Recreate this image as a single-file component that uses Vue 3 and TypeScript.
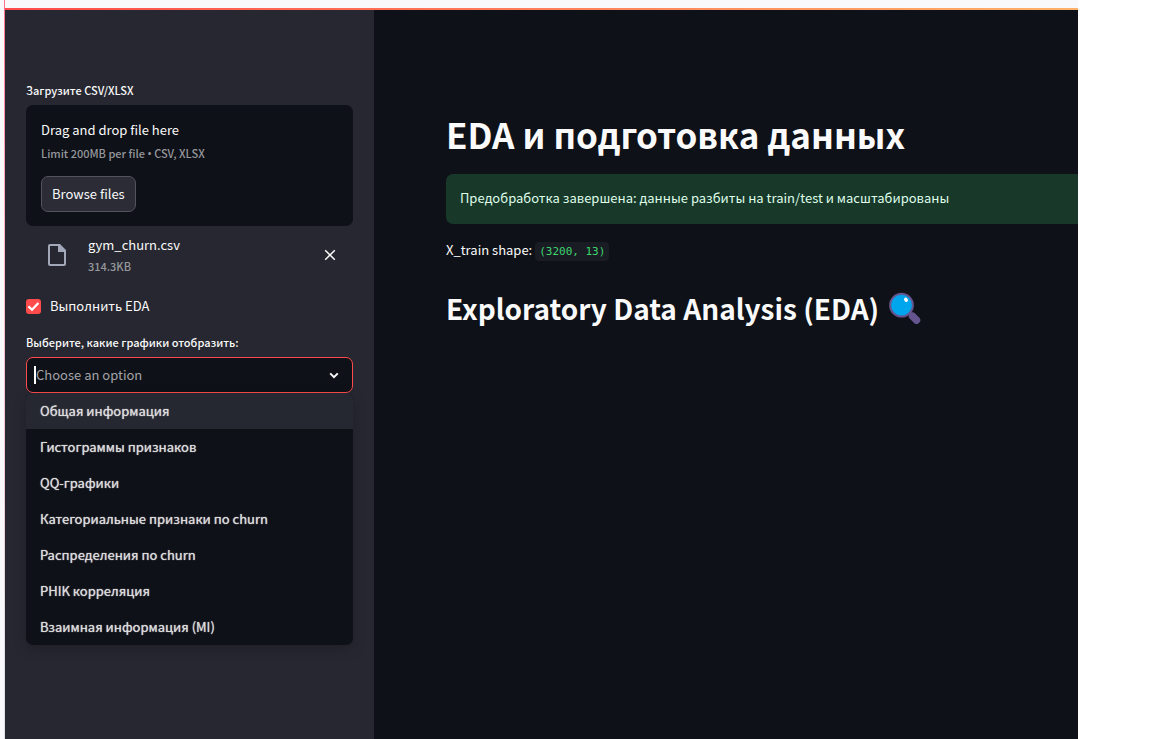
<script setup lang="ts">
import { ref } from 'vue'

const runEda = ref(true)
const query = ref('')
const active = ref(0)
const fileName = ref<string | null>('gym_churn.csv')
const options: string[] = [
  'Общая информация',
  'Гистограммы признаков',
  'QQ-графики',
  'Категориальные признаки по churn',
  'Распределения по churn',
  'PHIK корреляция',
  'Взаимная информация (MI)',
]
</script>

<template>
  <div class="page">
    <div class="rail"></div>
    <div class="window">
      <div class="topbar"></div>
      <div class="app">
        <aside class="sidebar">
          <p id="upload-label" class="label">Загрузите CSV/XLSX</p>
          <section class="dropzone" aria-labelledby="upload-label">
            <p class="drop-title">Drag and drop file here</p>
            <p class="small">Limit 200MB per file <span class="dot">•</span> CSV, XLSX</p>
            <button type="button" class="browse">Browse files</button>
          </section>

          <div v-if="fileName" class="file">
            <svg class="file-icon" viewBox="0 0 18 22" aria-hidden="true">
              <path fill-rule="evenodd" d="M2 0h10l6 6v14a2 2 0 0 1-2 2H2a2 2 0 0 1-2-2V2A2 2 0 0 1 2 0ZM2 2v18h14V8H10V2Z" />
            </svg>
            <div class="file-text">
              <p class="file-name">{{ fileName }}</p>
              <p class="small">314.3KB</p>
            </div>
            <button type="button" class="remove" aria-label="Remove file" @click="fileName = null">
              <svg viewBox="0 0 12 12" aria-hidden="true"><path d="M1.2 1.2l9.6 9.6M10.8 1.2l-9.6 9.6" /></svg>
            </button>
          </div>

          <label class="check">
            <input v-model="runEda" type="checkbox" />
            <span>Выполнить EDA</span>
          </label>

          <label class="label" for="charts">Выберите, какие графики отобразить:</label>
          <div class="select">
            <div class="control">
              <span class="caret"></span>
              <input id="charts" v-model="query" type="text" role="combobox" aria-expanded="true" aria-controls="chart-list" placeholder="Choose an option" />
              <svg class="chevron" viewBox="0 0 10 7" aria-hidden="true"><path d="M1.2 1.4L5 5.2l3.8-3.8" /></svg>
            </div>
            <ul id="chart-list" class="menu" role="listbox">
              <li
                v-for="(option, i) in options"
                :key="option"
                role="option"
                class="option"
                :class="{ active: i === active }"
                :aria-selected="i === active"
                @mouseenter="active = i"
              >{{ option }}</li>
            </ul>
          </div>
        </aside>

        <main class="main">
          <h1>EDA и подготовка данных</h1>
          <div class="alert" role="status">Предобработка завершена: данные разбиты на train/test и масштабированы</div>
          <p class="shape">X_train shape: <code>(3200, 13)</code></p>
          <h2>
            <span>Exploratory Data Analysis (EDA)</span>
            <svg class="lens" viewBox="0 0 32 32" aria-hidden="true">
              <path d="M20 20l2.5 2.5" stroke="#64558f" stroke-width="3" />
              <path d="M23.5 24.2l4 4" stroke="#64558f" stroke-width="7.5" stroke-linecap="round" />
              <circle cx="12.5" cy="13.2" r="11.4" fill="#00a6ed" stroke="#64558f" stroke-width="2" />
              <ellipse cx="17" cy="7.8" rx="1.8" ry="2.3" fill="#fff" transform="rotate(-30 17 7.8)" />
            </svg>
          </h2>
        </main>
      </div>
    </div>
  </div>
</template>

<style>
body {
  margin: 0;
  background: #fff;
}
</style>

<style scoped>
.page {
  display: flex;
  min-height: 100vh;
  padding-right: 74px;
  box-sizing: border-box;
  overflow: hidden;
  color: #fafafa;
  font: 13px/20px "Noto Sans CJK SC", "Noto Sans", sans-serif;
}
p, h1, h2, ul {
  margin: 0;
  padding: 0;
}
button, input {
  font: inherit;
  color: inherit;
}
.rail {
  flex: none;
  width: 4px;
  background: #f9f9fc;
  border-right: 1px solid;
  border-image: linear-gradient(#ff7088, #ffb0bc 30%, #e0dfe6 90%) 1;
}
.window {
  flex: 1;
  min-width: 0;
  display: flex;
  flex-direction: column;
}
.topbar {
  height: 8px;
  background: #f9f9fc;
  border-bottom: 2px solid;
  border-image: linear-gradient(90deg, #ff4b4b, #ffb168) 1;
}
.app {
  flex: 1;
  display: flex;
  background: #0e1117;
}
.sidebar {
  flex: none;
  width: 369px;
  padding: 70px 21px 0;
  box-sizing: border-box;
  background: #262730;
}
.label {
  display: block;
  font-size: 11px;
  font-weight: 500;
  margin-bottom: 5px;
}
.dropzone {
  padding: 15px 15px 14px;
  border-radius: 7px;
  background: #0e1117;
}
.small {
  font-size: 11px;
  font-weight: 500;
  color: #96979c;
}
.dot {
  font-family: "Noto Sans", sans-serif;
}
.drop-title {
  margin-bottom: 3px;
}
.browse {
  display: block;
  margin-top: 12px;
  height: 36px;
  padding: 0 10px;
  border: 1px solid #52535b;
  border-radius: 7px;
  background: #2b2c36;
}
.file {
  display: flex;
  align-items: center;
  padding: 9px 17px 0 22px;
}
.file-icon, .remove {
  margin-bottom: 2px;
}
.file-icon {
  width: 18px;
  height: 22px;
  fill: #a3a8b8;
}
.file-text {
  flex: 1;
  padding-left: 22px;
}
.file-name {
  margin-bottom: 1px;
}
.remove {
  display: flex;
  padding: 0;
  border: 0;
  background: none;
}
.remove svg {
  width: 12px;
  height: 12px;
  fill: none;
  stroke: #fafafa;
  stroke-width: 1.5;
}
.check {
  display: flex;
  align-items: center;
  gap: 9px;
  margin: 20px 0 16px;
}
.check input {
  appearance: none;
  width: 15px;
  height: 15px;
  margin: 0;
  border-radius: 3px;
  background: #3a3b45;
}
.check input:checked {
  background: #ff4b4b url("data:image/svg+xml,%3Csvg xmlns='http://www.w3.org/2000/svg' viewBox='0 0 15 15'%3E%3Cpath d='M2.4 7.4l3.6 3.4 6.4-6.8' fill='none' stroke='white' stroke-width='2.2'/%3E%3C/svg%3E");
}
.select {
  position: relative;
}
.control {
  display: flex;
  align-items: center;
  height: 36px;
  padding: 0 13px 0 7px;
  box-sizing: border-box;
  border: 1px solid #ff4b4b;
  border-radius: 7px;
  background: #0e1117;
}
.control input {
  flex: 1;
  min-width: 0;
  padding: 0;
  border: 0;
  outline: 0;
  background: none;
}
.control input::placeholder {
  color: #a3a4a8;
  opacity: 1;
}
.caret {
  width: 2px;
  height: 18px;
  background: #fff;
}
.chevron {
  width: 10px;
  height: 7px;
  fill: none;
  stroke: #fafafa;
  stroke-width: 2;
}
.menu {
  position: absolute;
  top: 100%;
  left: 0;
  right: 0;
  overflow: hidden;
  list-style: none;
  border-radius: 7px;
  background: #0e1117;
  box-shadow: 0 4px 14px rgba(0, 0, 0, 0.2);
}
.option {
  padding: 8px 14px;
  color: #dcdcdd;
  text-shadow: 0 0 1px #dcdcdd;
}
.option.active {
  background: #262831;
}
.main {
  flex: 1;
  min-width: 0;
  padding: 98px 0 0 72px;
}
h1 {
  font-size: 35px;
  line-height: 52px;
  font-weight: 700;
  white-space: nowrap;
}
.alert {
  margin-top: 14px;
  padding: 14px 14px 16px;
  border-radius: 7px 0 0 7px;
  background: #183929;
  color: #dffde9;
}
.shape {
  margin-top: 16px;
}
code {
  padding: 3px 4px;
  border-radius: 4px;
  background: #1a1c24;
  color: #3dd56d;
  font: 11px/16px "DejaVu Sans Mono", monospace;
}
h2 {
  display: flex;
  align-items: center;
  gap: 10px;
  margin-top: 28px;
  font-size: 28px;
  line-height: 40px;
  font-weight: 600;
  white-space: nowrap;
}
.lens {
  width: 32px;
  height: 32px;
}
</style>
